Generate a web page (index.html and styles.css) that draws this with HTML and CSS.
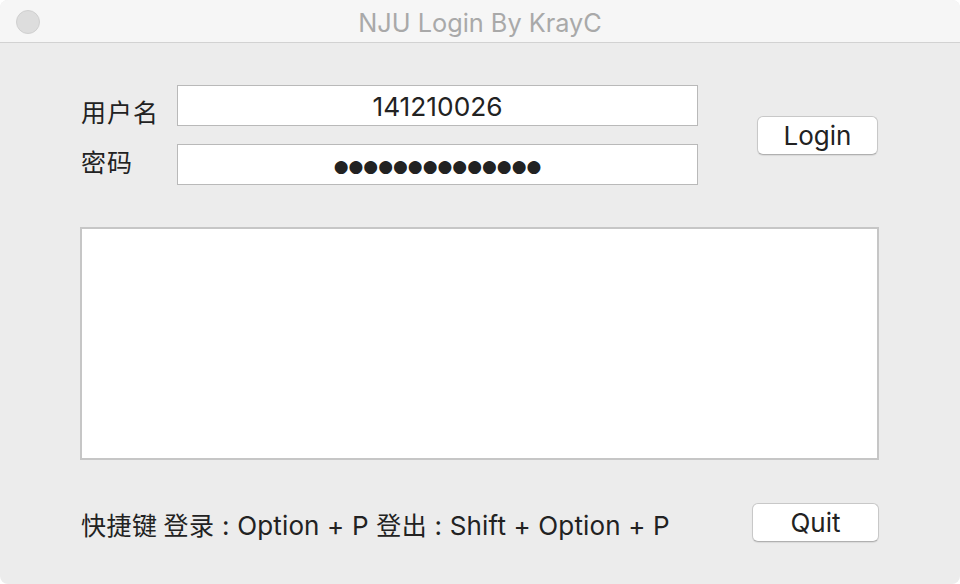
FILE: index.html
```html
<!DOCTYPE html>
<html lang="zh">
<head>
<meta charset="utf-8">
<title>NJU Login By KrayC</title>
<link rel="stylesheet" href="styles.css">
</head>
<body>
<div class="window">
  <div class="titlebar">
    <span class="light"></span>
    <span class="title">NJU Login By KrayC</span>
  </div>
  <div class="content">
    <div class="top">
      <div class="fields">
        <div class="row">
          <span class="label label-user">用户名</span>
          <div class="input">141210026</div>
        </div>
        <div class="row">
          <span class="label label-pass">密码</span>
          <div class="input dots">●●●●●●●●●●●●●●</div>
        </div>
      </div>
      <button class="btn btn-login">Login</button>
    </div>
    <div class="log"></div>
    <div class="bottom">
      <span class="hint"><span class="cjk">快捷键 登录</span> : Option + P <span class="cjk">登出</span> : Shift + Option + P</span>
      <button class="btn btn-quit">Quit</button>
    </div>
  </div>
</div>
</body>
</html>
```
FILE: styles.css
```css
html, body {
  margin: 0;
  padding: 0;
  background: #ffffff;
}
body {
  width: 960px;
  height: 584px;
  overflow: hidden;
  font-family: "Inter", "Noto Sans CJK SC", sans-serif;
  color: #222;
}
.window {
  width: 960px;
  height: 584px;
  background: #ececec;
  border-radius: 8px;
  overflow: hidden;
  box-sizing: border-box;
}
.titlebar {
  height: 42px;
  background: #f6f6f6;
  border-bottom: 1px solid #d2d2d2;
  display: flex;
  align-items: center;
  justify-content: center;
  position: relative;
}
.light {
  position: absolute;
  left: 16px;
  top: 10px;
  width: 22px;
  height: 22px;
  border-radius: 50%;
  background: #dddddd;
  border: 1px solid #d0d0d0;
}
.title {
  font-size: 25.3px;
  color: #a9a9a9;
  padding-top: 2px;
}
.content {
  padding: 42px 81px 0 80px;
}
.top {
  display: flex;
  align-items: center;
}
.fields {
  display: flex;
  flex-direction: column;
  gap: 18px;
}
.row {
  display: flex;
  align-items: center;
}
.label {
  width: 97px;
  font-size: 25px;
  font-family: "Noto Sans CJK SC", sans-serif;
  padding-left: 1px;
  box-sizing: border-box;
  line-height: 1;
  letter-spacing: 1px;
}
.label-user { margin-top: 12px; }
.label-pass { margin-top: -6px; }
.input {
  width: 521px;
  height: 41px;
  box-sizing: border-box;
  background: #fff;
  border: 1px solid #b9b9b9;
  display: flex;
  align-items: center;
  justify-content: center;
  font-size: 26.3px;
  padding-top: 2px;
}
.dots {
  font-size: 17px;
  padding-top: 3px;
  font-family: "DejaVu Sans", sans-serif;
  color: #222;
}
.btn {
  background: #fff;
  border: 1px solid #c8c8c8;
  border-bottom-color: #b0b0b0;
  border-radius: 6px;
  box-shadow: 0 1px 1px rgba(0,0,0,0.08);
  font-family: "Inter", sans-serif;
  font-size: 26px;
  color: #222;
  padding: 2px 0 0;
  height: 39px;
  line-height: 1;
}
.btn-login {
  width: 121px;
  margin-left: 59px;
}
.log {
  margin-top: 42px;
  width: 799px;
  height: 233px;
  box-sizing: border-box;
  background: #fff;
  border: 2px solid #c6c6c6;
}
.bottom {
  margin-top: 42px;
  display: flex;
  align-items: center;
  justify-content: space-between;
}
.hint {
  font-size: 26px;
  padding-left: 1px;
  padding-top: 4px;
  letter-spacing: 0.15px;
}
.cjk {
  font-family: "Noto Sans CJK SC", sans-serif;
  font-size: 25px;
  letter-spacing: 0.5px;
}
.btn-quit {
  width: 127px;
}
```
